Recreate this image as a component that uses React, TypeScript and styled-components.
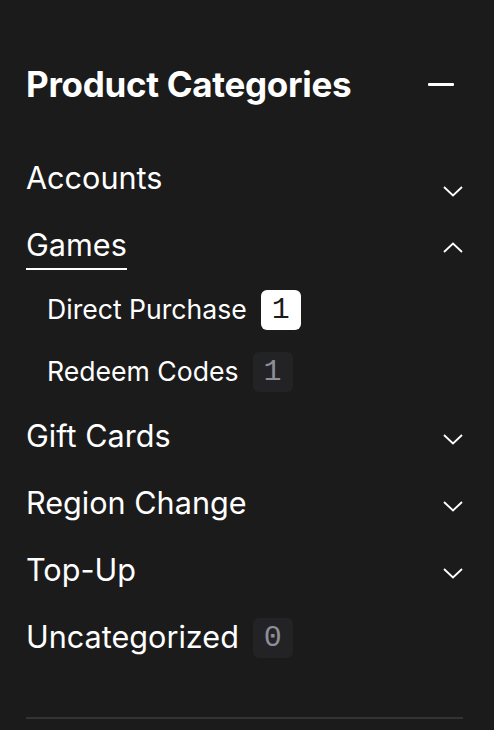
import styled, { createGlobalStyle } from "styled-components";

const GlobalStyle = createGlobalStyle`
  html, body {
    margin: 0;
    padding: 0;
    background: #1b1b1b;
  }
  body {
    font-family: Inter, "Noto Sans", sans-serif;
    color: #ffffff;
  }
`;

const Sidebar = styled.aside`
  width: 494px;
  height: 730px;
  box-sizing: border-box;
  padding: 58px 31px 0 26px;
  background: #1b1b1b;
  overflow: hidden;
`;

const Header = styled.div`
  display: flex;
  align-items: center;
  justify-content: space-between;
  height: 52px;
  margin-bottom: 35px;
`;

const Title = styled.h2`
  margin: 0;
  font-size: 35px;
  font-weight: 700;
  letter-spacing: -0.3px;
`;

const Minus = styled.span`
  display: block;
  width: 26px;
  height: 3px;
  margin-right: 9px;
  background: #ffffff;
  border-radius: 1px;
`;

const List = styled.ul`
  list-style: none;
  margin: 0;
  padding: 0;
`;

const Row = styled.div<{ $sub?: boolean }>`
  display: flex;
  align-items: center;
  justify-content: space-between;
  height: ${(p) => (p.$sub ? 62 : 67)}px;
  padding-left: ${(p) => (p.$sub ? 21 : 0)}px;
`;

const LabelGroup = styled.div`
  display: flex;
  align-items: center;
  gap: 14px;
`;

const Label = styled.span<{ $sub?: boolean; $active?: boolean }>`
  font-size: ${(p) => (p.$sub ? 26.6 : 30.6)}px;
  font-weight: 400;
  line-height: 1.25;
  padding-bottom: ${(p) => (p.$active ? 3 : 0)}px;
  border-bottom: ${(p) => (p.$active ? "2px solid #ffffff" : "none")};
  margin-bottom: ${(p) => (p.$active ? -5 : 0)}px;
`;

const Badge = styled.span<{ $on?: boolean }>`
  display: inline-flex;
  align-items: center;
  justify-content: center;
  width: 40px;
  height: 40px;
  border-radius: 6px;
  background: ${(p) => (p.$on ? "#ffffff" : "#232326")};
  color: ${(p) => (p.$on ? "#1b1b1b" : "#8e8e99")};
  font-family: "Liberation Mono", "DejaVu Sans Mono", monospace;
  font-size: 30px;
`;

const Toggle = styled.svg<{ $drop?: number }>`
  flex: none;
  margin-top: ${(p) => (p.$drop ?? 6)}px;
`;

const Divider = styled.hr`
  border: none;
  height: 2px;
  background: #333333;
  margin: 46px 0 0;
`;

const Chevron = ({ up, drop }: { up?: boolean; drop?: number }) => (
  <Toggle $drop={drop} width="20" height="11" viewBox="0 0 20 11">
    <polyline
      points={up ? "1,10 10,1.5 19,10" : "1,1 10,9.5 19,1"}
      fill="none"
      stroke="#ffffff"
      strokeWidth="1.8"
    />
  </Toggle>
);

type Cat = {
  name: string;
  count?: number;
  open?: boolean;
  expandable?: boolean;
  drop?: number;
  children?: { name: string; count: number; on?: boolean }[];
};

const categories: Cat[] = [
  { name: "Accounts", expandable: true, drop: 26 },
  {
    name: "Games",
    expandable: true,
    open: true,
    drop: 4,
    children: [
      { name: "Direct Purchase", count: 1, on: true },
      { name: "Redeem Codes", count: 1 },
    ],
  },
  { name: "Gift Cards", expandable: true },
  { name: "Region Change", expandable: true },
  { name: "Top-Up", expandable: true },
  { name: "Uncategorized", count: 0 },
];

export default function App() {
  return (
    <>
      <GlobalStyle />
      <Sidebar>
        <Header>
          <Title>Product Categories</Title>
          <Minus />
        </Header>
        <List>
          {categories.map((c) => (
            <li key={c.name}>
              <Row>
                <LabelGroup>
                  <Label $active={c.open}>{c.name}</Label>
                  {c.count !== undefined && <Badge>{c.count}</Badge>}
                </LabelGroup>
                {c.expandable && <Chevron up={c.open} drop={c.drop} />}
              </Row>
              {c.children && (
                <List>
                  {c.children.map((s) => (
                    <li key={s.name}>
                      <Row $sub>
                        <LabelGroup>
                          <Label $sub>{s.name}</Label>
                          <Badge $on={s.on}>{s.count}</Badge>
                        </LabelGroup>
                      </Row>
                    </li>
                  ))}
                </List>
              )}
            </li>
          ))}
        </List>
        <Divider />
      </Sidebar>
    </>
  );
}
